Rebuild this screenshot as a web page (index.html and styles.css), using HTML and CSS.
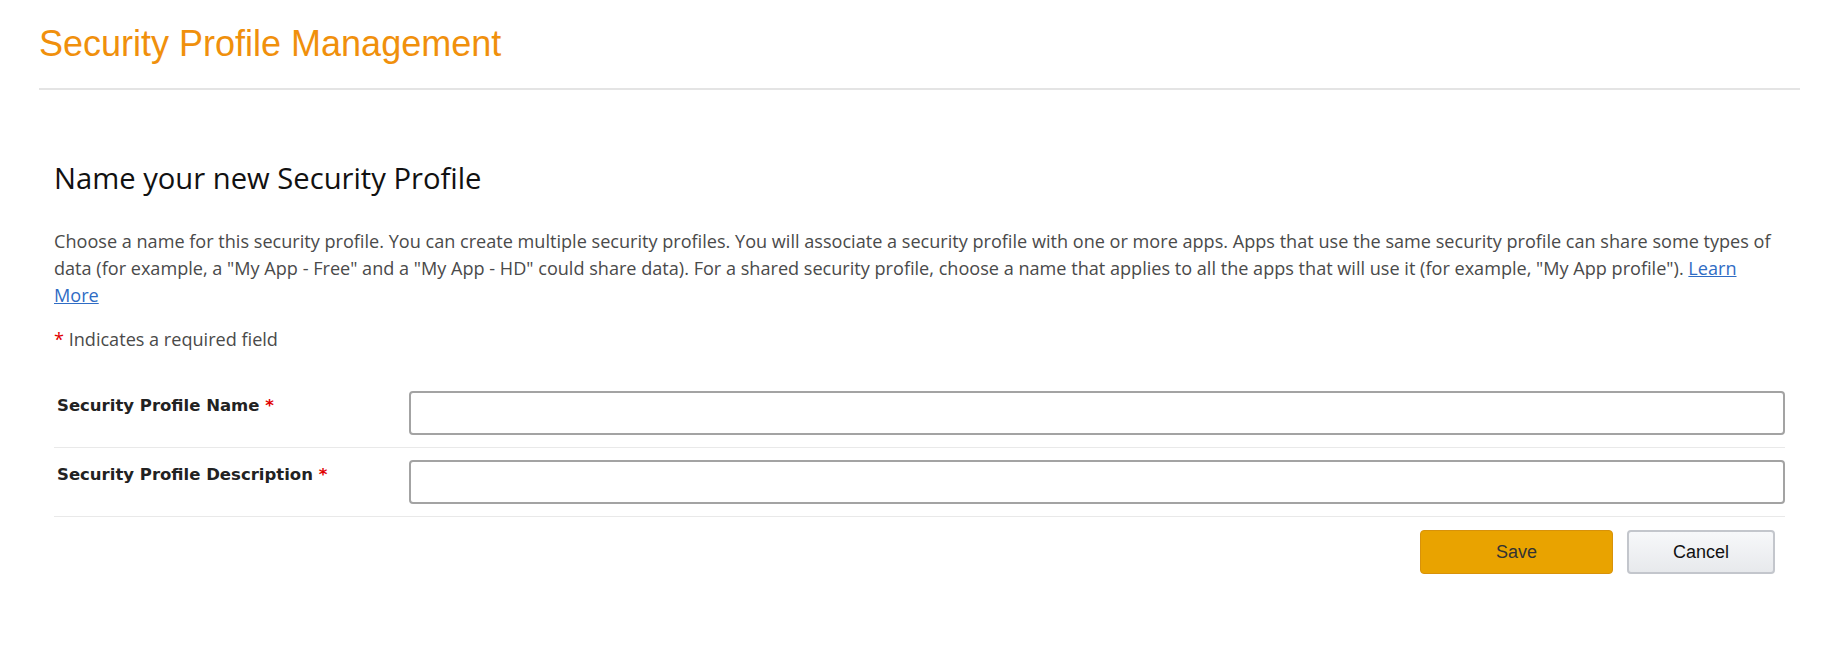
FILE: index.html
```html
<!DOCTYPE html>
<html lang="en">
<head>
<meta charset="utf-8">
<title>Security Profile Management</title>
<link rel="stylesheet" href="styles.css">
</head>
<body>
<div class="page">
  <h1 class="page-title">Security Profile Management</h1>
  <div class="rule"></div>
  <section class="panel">
    <h2 class="panel-title">Name your new Security Profile</h2>
    <p class="intro">Choose a name for this security profile. You can create multiple security profiles. You will associate a security profile with one or more apps. Apps that use the same security profile can share some types of data (for example, a "My App - Free" and a "My App - HD" could share data). For a shared security profile, choose a name that applies to all the apps that will use it (for example, "My App profile"). <a href="#" class="link">Learn More</a></p>
    <p class="required-note"><span class="star">*</span> Indicates a required field</p>
    <form class="form">
      <div class="row">
        <label class="label" for="spname">Security Profile Name <span class="star">*</span></label>
        <input class="field" id="spname" type="text">
      </div>
      <div class="row">
        <label class="label" for="spdesc">Security Profile Description <span class="star">*</span></label>
        <input class="field" id="spdesc" type="text">
      </div>
      <div class="actions">
        <button type="button" class="btn btn-save">Save</button>
        <button type="button" class="btn btn-cancel">Cancel</button>
      </div>
    </form>
  </section>
</div>
</body>
</html>
```

FILE: styles.css
```css
html, body {
  margin: 0;
  padding: 0;
  background: #fff;
}

.page {
  padding: 24px 48px 0 39px;
}

.page-title {
  margin: 0;
  font-family: "Liberation Sans", Arial, sans-serif;
  font-weight: normal;
  font-size: 36px;
  line-height: 40px;
  color: #f0900c;
}

.rule {
  margin-top: 24px;
  height: 2px;
  background: #e4e4e4;
}

.panel {
  padding: 0 15px;
}

.panel-title {
  margin: 70px 0 0;
  font-family: "Open Sans", "Noto Sans", sans-serif;
  font-weight: normal;
  font-size: 29.2px;
  line-height: 36px;
  color: #111;
}

.intro {
  margin: 32px 0 0;
  font-family: "Open Sans", "Noto Sans", sans-serif;
  font-size: 18.1px;
  line-height: 27px;
  color: #4a4a4a;
}

.link {
  color: #2f6cc4;
  text-decoration: underline;
}

.required-note {
  margin: 17px 0 0;
  font-family: "Open Sans", "Noto Sans", sans-serif;
  font-size: 18.1px;
  line-height: 27px;
  color: #4a4a4a;
}

.star {
  color: #e10000;
}

.form {
  margin-top: 26px;
}

.row {
  display: flex;
  align-items: flex-start;
  padding: 12px 0 12px;
  border-bottom: 1px solid #e9e9e9;
}

.label {
  width: 352px;
  flex: none;
  padding: 5px 0 0 3px;
  font-family: "DejaVu Sans", Verdana, sans-serif;
  font-weight: bold;
  font-size: 16.5px;
  line-height: 20px;
  color: #222;
}

.field {
  flex: 1;
  box-sizing: border-box;
  height: 44px;
  margin: 0;
  border: 2px solid #a3a3a3;
  border-radius: 4px;
  background: #fff;
  font-size: 16px;
}

.actions {
  display: flex;
  justify-content: flex-end;
  gap: 14px;
  padding: 13px 10px 0 0;
}

.btn {
  box-sizing: border-box;
  height: 44px;
  border-radius: 4px;
  font-family: "Liberation Sans", Arial, sans-serif;
  font-size: 18px;
  cursor: pointer;
}

.btn-save {
  width: 193px;
  background: #e9a300;
  border: 1px solid #d8920a;
  color: #333;
}

.btn-cancel {
  width: 148px;
  background: linear-gradient(#f7f8fa, #e7e9ec);
  border: 2px solid #c3c6cc;
  color: #111;
}
```
